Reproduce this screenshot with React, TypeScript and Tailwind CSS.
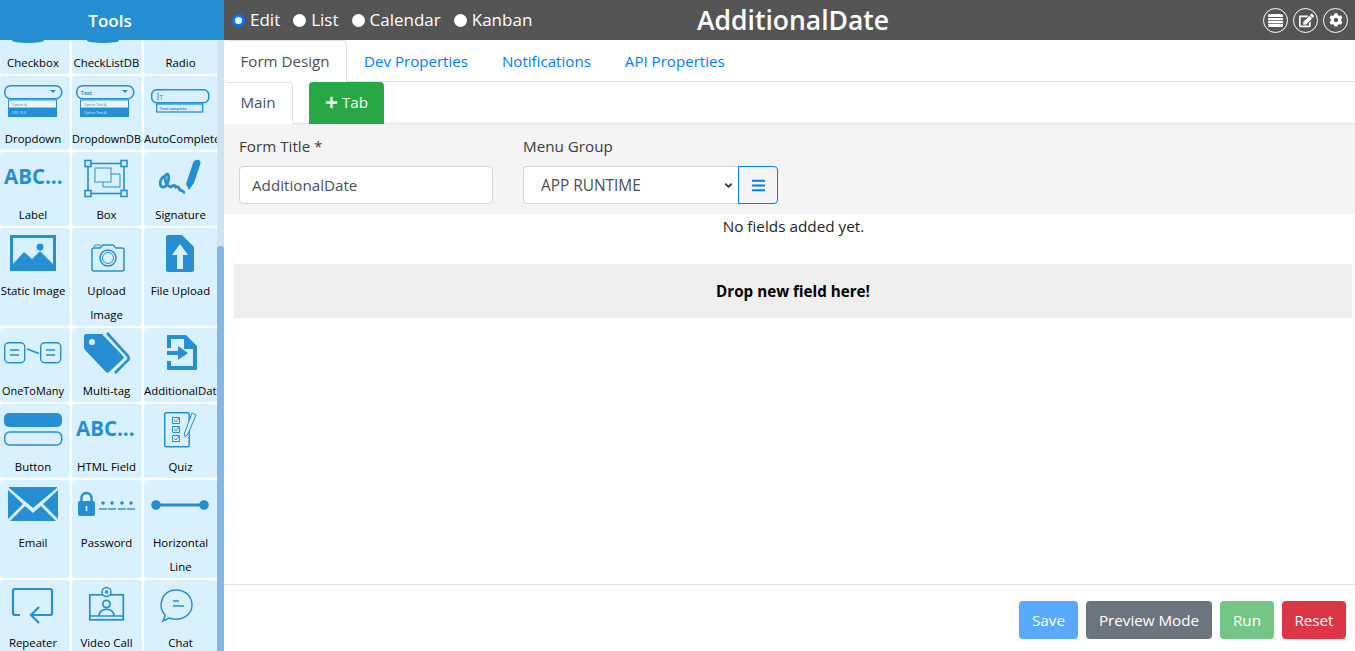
import { FaBars, FaCog, FaEdit, FaPlus } from "react-icons/fa";
import { ChevronDown } from "lucide-react";
import type { ReactNode } from "react";

const BLUE = "#268fd3";
const TILE = "#d9f1ff";

const Svg = ({ children }: { children?: ReactNode }) => (
  <svg viewBox="0 0 72 50" className="h-[50px] w-[72px] shrink-0" fill="none">
    {children}
  </svg>
);

const DropdownIcon = ({ db }: { db?: boolean }) => (
  <Svg>
    <rect x="4.7" y="9.7" width="57" height="13" rx="6" stroke={BLUE} strokeWidth="1.5" />
    {db && <text x="9" y="18.5" fontSize="5" fill={BLUE} fontWeight="700">Text</text>}
    <path d="M50 14h6l-3 3z" fill={BLUE} />
    <rect x="8.5" y="24" width="48" height="8" fill="#eaf7ff" stroke={BLUE} />
    <text x="12" y="30" fontSize="3.5" fill={BLUE}>{db ? "Option Text A" : "Option A"}</text>
    <rect x="8" y="32" width="49" height="9" fill={BLUE} />
    <text x="12" y="38" fontSize="3.5" fill="#d9f1ff">{db ? "Option Text A" : "ODI 16 0"}</text>
  </Svg>
);

const AutoCompleteIcon = () => (
  <Svg>
    <rect x="7.7" y="13.7" width="57" height="13" rx="5" stroke={BLUE} strokeWidth="1.5" />
    <path d="M14 16.5v8" stroke={BLUE} strokeWidth="0.9" />
    <text x="15.5" y="24" fontSize="6.5" fill={BLUE}>T</text>
    <rect x="12.7" y="28" width="46" height="8" fill={TILE} stroke={BLUE} strokeWidth="1.3" />
    <text x="15.5" y="33.7" fontSize="3.8" fill={BLUE} fontWeight="700">Text complete</text>
  </Svg>
);

const AbcIcon = () => (
  <Svg>
    <text x="4" y="32" fontSize="20.5" fontWeight="700" fill={BLUE} fontFamily="'Open Sans', sans-serif">ABC...</text>
  </Svg>
);

const BoxIcon = () => (
  <Svg>
    <rect x="16" y="11.5" width="36" height="30" stroke={BLUE} strokeWidth="1.6" />
    {[[13, 8.5], [49, 8.5], [13, 38.5], [49, 38.5]].map(([x, y]) => (
      <rect key={`${x}-${y}`} x={x} y={y} width="6" height="6" fill={TILE} stroke={BLUE} strokeWidth="1.6" />
    ))}
    <rect x="23" y="16" width="16" height="14" stroke={BLUE} />
    <path d="M39 22h9v13H31v-5" stroke={BLUE} />
  </Svg>
);

const SignatureIcon = () => (
  <Svg>
    <path d="M42 32 49 11c1-4 6-4 7-2 1 1 0 3 0 4l-6 18-5 7z" fill={BLUE} />
    <path d="M20 24c-5 4-5 12 0 11 5-2 6-13 3-13-3 1-3 11 4 13 2-2 4-2 5 0 2-1 3 1 4 3 2 0 3 2 5 3" stroke={BLUE} strokeWidth="2.8" />
  </Svg>
);

const ImageIcon = () => (
  <Svg>
    <path fillRule="evenodd" clipRule="evenodd" d="M10 7h46v36H10zm3 3v26l11-12 8 7 8-8 13 13V10z" fill={BLUE} />
    <circle cx="40" cy="19" r="3.5" fill={BLUE} />
  </Svg>
);

const CameraIcon = () => (
  <Svg>
    <path d="M22 20h6l3-3h10l3 3h6c1 0 2 1 2 2v19c0 1-1 2-2 2H22c-1 0-2-1-2-2V22c0-1 1-2 2-2z" stroke={BLUE} strokeWidth="1.5" />
    <path d="M22 19l1-2h6" stroke={BLUE} />
    <circle cx="36" cy="30" r="8" stroke={BLUE} strokeWidth="1.5" />
    <circle cx="36" cy="30" r="5.5" stroke={BLUE} />
  </Svg>
);

const FileUpIcon = () => (
  <Svg>
    <path d="M24 7h14l12 12v23c0 1-1 2-2 2H24c-1 0-2-1-2-2V9c0-1 1-2 2-2z" fill={BLUE} />
    <path d="M36 16l8 11h-5v14h-6V27h-5z" fill={TILE} />
  </Svg>
);

const OneToManyIcon = () => (
  <Svg>
    <rect x="4.7" y="14.7" width="20" height="20" rx="4" stroke={BLUE} strokeWidth="1.4" />
    <rect x="40.7" y="14.7" width="20" height="20" rx="4" stroke={BLUE} strokeWidth="1.4" />
    <path d="M10 22h9M10 27h9M46 22h9M46 27h9M27 21l12 4.5" stroke={BLUE} strokeWidth="1.4" />
  </Svg>
);

const TagIcon = () => (
  <Svg>
    <path d="M14 6h16l21 22c1 1 1 2 0 3L37 44c-1 1-2 1-3 0L13 22c-1-2-1-2-1-4l0-10c0-1 1-2 2-2z" fill={BLUE} />
    <circle cx="20" cy="14" r="3" fill={TILE} />
    <path d="M35 5l21 23c1 2 1 3 0 4L43 45" stroke={BLUE} strokeWidth="2.6" />
  </Svg>
);

const AdditionalIcon = () => (
  <Svg>
    <path fillRule="evenodd" clipRule="evenodd" d="M23 7h19l11 11v24H23V33h4v5h22V21h-9v-10H27v9h-4z" fill={BLUE} />
    <path d="M23 23h11v-5l10 7-10 7v-5H23z" fill={BLUE} />
  </Svg>
);

const ButtonIcon = () => (
  <Svg>
    <rect x="4" y="9" width="58" height="14" rx="5" fill={BLUE} />
    <rect x="4.7" y="28" width="57" height="13" rx="5" stroke={BLUE} strokeWidth="1.5" />
  </Svg>
);

const QuizIcon = () => (
  <Svg>
    <rect x="20.7" y="8.7" width="24.5" height="34" rx="1.5" stroke={BLUE} strokeWidth="1.5" />
    <path d="M28.5 13.5h7v6h-7zM28.5 22.5h7v6h-7zM28.5 31.5h7v6h-7z" stroke={BLUE} />
    <path d="M30 16l2 2 3-4M30 25l2 2 3-4M30 34l2 2 3-4" stroke={BLUE} />
    <path d="M48 9l4 2-8 19-3 3-0.5-4z" fill={TILE} stroke={BLUE} />
  </Svg>
);

const EmailIcon = () => (
  <Svg>
    <path d="M9 7h48v1L33 28 9 8z" fill={BLUE} />
    <path d="M8 10l15 14L8 39zM58 10 43 24l15 15zM10 41l15-15 8 7 8-7 15 15z" fill={BLUE} />
  </Svg>
);

const PasswordIcon = () => (
  <Svg>
    <path d="M9.5 21v-3a5 5 0 0 1 10 0v3" stroke={BLUE} strokeWidth="2.4" />
    <rect x="6" y="21" width="17" height="15" rx="2" fill={BLUE} />
    <rect x="13.7" y="26" width="1.6" height="5" fill={TILE} />
    {[31, 40, 50, 59].map((x) => (
      <g key={x}>
        <circle cx={x} cy="23" r="1.8" fill={BLUE} />
        <path d={`M${x - 4} 29h8`} stroke={BLUE} strokeWidth="1.3" />
      </g>
    ))}
  </Svg>
);

const LineIcon = () => (
  <Svg>
    <path d="M12 25h48" stroke={BLUE} strokeWidth="3.2" />
    <circle cx="12" cy="25" r="4.8" fill={BLUE} />
    <circle cx="60" cy="25" r="4.8" fill={BLUE} />
  </Svg>
);

const RepeaterIcon = () => (
  <Svg>
    <path d="M20 35h-5c-1 0-2-1-2-2V11c0-1 1-2 2-2h35c1 0 2 1 2 2v22c0 1-1 2-2 2H32" stroke={BLUE} strokeWidth="2.2" />
    <path d="M39 27l-8 8 8 8" stroke={BLUE} strokeWidth="2.2" />
  </Svg>
);

const VideoIcon = () => (
  <Svg>
    <rect x="17.8" y="14.8" width="33.5" height="25" stroke={BLUE} strokeWidth="1.7" />
    <path d="M17 36h34" stroke={BLUE} strokeWidth="1.4" />
    <circle cx="34.5" cy="12" r="4.5" fill={TILE} stroke={BLUE} strokeWidth="1.5" />
    <circle cx="34.5" cy="12" r="1.8" fill={BLUE} />
    <circle cx="34.5" cy="24" r="3.6" stroke={BLUE} strokeWidth="1.7" />
    <path d="M27 36c0-9 15-9 15 0" stroke={BLUE} strokeWidth="1.7" />
  </Svg>
);

const ChatIcon = () => (
  <Svg>
    <path d="M21 35c-8-9-3-25 11-25 10 0 16 7 16 15 0 11-12 17-23 13l-6 3c1-2 2-4 2-6z" stroke={BLUE} strokeWidth="1.5" />
    <path d="M29 21h6M29 26h11" stroke={BLUE} strokeWidth="1.5" />
  </Svg>
);

const TopStub = ({ cx }: { cx: number }) => (
  <Svg>
    <ellipse cx={cx} cy="40.5" rx="16" ry="2.5" fill={BLUE} />
  </Svg>
);

type Tool = { label: string; icon: ReactNode };

const rows: { tall?: boolean; tools: Tool[] }[] = [
  {
    tools: [
      { label: "Checkbox", icon: <TopStub cx={28} /> },
      { label: "CheckListDB", icon: <TopStub cx={31} /> },
      { label: "Radio", icon: <Svg /> },
    ],
  },
  {
    tools: [
      { label: "Dropdown", icon: <DropdownIcon /> },
      { label: "DropdownDB", icon: <DropdownIcon db /> },
      { label: "AutoComplete", icon: <AutoCompleteIcon /> },
    ],
  },
  {
    tools: [
      { label: "Label", icon: <AbcIcon /> },
      { label: "Box", icon: <BoxIcon /> },
      { label: "Signature", icon: <SignatureIcon /> },
    ],
  },
  {
    tall: true,
    tools: [
      { label: "Static Image", icon: <ImageIcon /> },
      { label: "Upload Image", icon: <CameraIcon /> },
      { label: "File Upload", icon: <FileUpIcon /> },
    ],
  },
  {
    tools: [
      { label: "OneToMany", icon: <OneToManyIcon /> },
      { label: "Multi-tag", icon: <TagIcon /> },
      { label: "AdditionalDate", icon: <AdditionalIcon /> },
    ],
  },
  {
    tools: [
      { label: "Button", icon: <ButtonIcon /> },
      { label: "HTML Field", icon: <AbcIcon /> },
      { label: "Quiz", icon: <QuizIcon /> },
    ],
  },
  {
    tall: true,
    tools: [
      { label: "Email", icon: <EmailIcon /> },
      { label: "Password", icon: <PasswordIcon /> },
      { label: "Horizontal Line", icon: <LineIcon /> },
    ],
  },
  {
    tools: [
      { label: "Repeater", icon: <RepeaterIcon /> },
      { label: "Video Call", icon: <VideoIcon /> },
      { label: "Chat", icon: <ChatIcon /> },
    ],
  },
];

const ToolTile = ({ tool, tall, col }: { tool: Tool; tall?: boolean; col: number }) => {
  const clipped = tool.label === "AutoComplete" || tool.label === "AdditionalDate";
  const small = tool.label === "DropdownDB" || tool.label === "OneToMany";
  const inset = col === 0 ? "pr-[4px]" : col === 1 ? "pr-[1px]" : "";
  return (
    <div
      className={`flex flex-col items-start overflow-hidden rounded-[3px] bg-[#d9f1ff] ${tall ? "h-[98px]" : "h-[74px]"}`}
    >
      {tool.icon}
      <div
        className={`mt-[1px] w-full text-center leading-6 text-black ${inset} ${small ? "text-[10.9px]" : "text-[11.4px]"} ${clipped ? "whitespace-nowrap pr-0 text-left" : ""}`}
      >
        {tool.label}
      </div>
    </div>
  );
};

const Sidebar = () => (
  <aside className="flex h-[651px] w-[224px] shrink-0 flex-col overflow-hidden bg-white">
    <div className="z-10 flex h-[40px] shrink-0 items-center justify-center bg-[#268fd3] pr-[4px] pt-[1px] text-[17px] font-semibold text-white">
      Tools
    </div>
    <div className="flex min-h-0 flex-1">
      <div className="-mt-[40px] grid w-[217px] shrink-0 grid-cols-[70px_70px_73px] content-start gap-[2px]">
        {rows.map((row) =>
          row.tools.map((tool, col) => (
            <ToolTile key={tool.label} tool={tool} tall={row.tall} col={col} />
          )),
        )}
      </div>
      <div className="w-[7px] bg-[#cfe2f0] pt-[206px]">
        <div className="h-full w-full rounded-t-[3px] bg-[#85b7e6]" />
      </div>
    </div>
  </aside>
);

const RadioOption = ({ label, checked }: { label: string; checked?: boolean }) => (
  <label className="flex items-center gap-[5px]">
    <span
      className={`size-[13px] rounded-full bg-white ${checked ? "border-[3px] border-[#0075ff]" : ""}`}
    />
    {label}
  </label>
);

const TableGlyph = () => (
  <svg viewBox="0 0 16 14" className="h-[13px] w-[15px]" fill="#fff">
    <path d="M0 1c0-.6.4-1 1-1h14c.6 0 1 .4 1 1v2.3H0zM0 4.2h16v2.4H0zM0 7.5h16v2.4H0zM0 10.8h16V13c0 .6-.4 1-1 1H1c-.6 0-1-.4-1-1z" />
  </svg>
);

const TopBar = () => (
  <header className="relative flex h-[40px] shrink-0 items-center bg-[#555555] pl-[8px] pr-[7px] text-white">
    <div className="flex items-center gap-[13px] text-[17px]">
      <RadioOption label="Edit" checked />
      <RadioOption label="List" />
      <RadioOption label="Calendar" />
      <RadioOption label="Kanban" />
    </div>
    <h1 className="absolute left-[473px] text-[26.5px] font-semibold leading-none">AdditionalDate</h1>
    <div className="ml-auto flex items-center gap-[5px]">
      <span className="flex size-[25px] items-center justify-center rounded-full border border-white">
        <TableGlyph />
      </span>
      <span className="flex size-[25px] items-center justify-center rounded-full border border-white pl-[2px]">
        <FaEdit className="size-[15px]" />
      </span>
      <span className="flex size-[25px] items-center justify-center rounded-full border border-white">
        <FaCog className="size-[14px]" />
      </span>
    </div>
  </header>
);

const NavTabs = () => (
  <nav className="flex h-[42px] shrink-0 border-b border-[#dee2e6] text-[15.1px]">
    <span className="-mb-px flex h-[42px] w-[123px] items-center justify-center rounded-t-[4px] border-r border-t border-[#dee2e6] bg-white pb-[1px] text-[#495057]">
      Form Design
    </span>
    {["Dev Properties", "Notifications", "API Properties"].map((t) => (
      <span key={t} className="flex items-center px-[17px] pt-[1px] text-[#007bff]">
        {t}
      </span>
    ))}
  </nav>
);

const PageTabs = () => (
  <div className="flex h-[42px] shrink-0 border-b border-[#dee2e6] text-[15.2px]">
    <span className="-mb-px flex h-[42px] w-[69px] items-center justify-center rounded-t-[4px] border-r border-t border-[#dee2e6] bg-white pb-[2px] text-[#495057]">
      Main
    </span>
    <span className="-mb-px ml-[16px] flex h-[42px] w-[75px] items-center justify-center gap-[4px] rounded-t-[4px] bg-[#28a745] pb-[2px] text-white">
      <FaPlus className="size-[13px]" />
      Tab
    </span>
  </div>
);

const FormHeader = () => (
  <div className="flex h-[90px] shrink-0 gap-[30px] bg-[#f4f4f4] pl-[15px] pt-[10px] text-[15.2px] text-[#3c3c3c]">
    <div className="w-[254px]">
      <div className="mb-[8px] h-[24px] leading-6">Form Title *</div>
      <div className="flex h-[38px] items-center rounded-[4px] border border-[#ced4da] bg-white px-[12px] pt-[1px] text-[#495057]">
        AdditionalDate
      </div>
    </div>
    <div className="w-[255px]">
      <div className="mb-[8px] h-[24px] leading-6">Menu Group</div>
      <div className="flex h-[38px]">
        <div className="flex flex-1 items-center justify-between rounded-l-[4px] border border-r-0 border-[#ced4da] bg-white pl-[17px] pr-[4px] text-[15.4px] text-[#495057]">
          <span className="pt-[2px]">APP RUNTIME</span>
          <ChevronDown className="size-[11px] text-[#333]" strokeWidth={4} />
        </div>
        <div className="flex w-[40px] items-center justify-center rounded-r-[4px] border border-[#007bff] text-[#007bff]">
          <FaBars className="size-[15px]" />
        </div>
      </div>
    </div>
  </div>
);

const Canvas = () => (
  <div className="flex min-h-0 flex-1 flex-col text-[#212529]">
    <div className="pl-[8px] text-center text-[15.3px] leading-[25px]">No fields added yet.</div>
    <div className="ml-[10px] mr-[3px] mt-[25px] flex h-[54px] items-center justify-center bg-[#eeeeee] text-[15.2px] font-bold text-black">
      Drop new field here!
    </div>
  </div>
);

const Footer = () => (
  <footer className="flex h-[67px] shrink-0 items-start justify-end gap-[8px] border-t border-[#dee2e6] pr-[9px] pt-[16px] text-[15.2px] text-white">
    <button className="h-[38px] w-[59px] rounded-[4px] bg-[#59a9ff]">Save</button>
    <button className="h-[38px] w-[126px] rounded-[4px] bg-[#6c757d]">Preview Mode</button>
    <button className="h-[38px] w-[54px] rounded-[4px] bg-[#74c687]">Run</button>
    <button className="h-[38px] w-[64px] rounded-[4px] bg-[#dc3545]">Reset</button>
  </footer>
);

export default function App() {
  return (
    <div className="flex h-[651px] w-[1355px] overflow-hidden bg-white font-['Open_Sans',sans-serif]">
      <Sidebar />
      <main className="flex min-w-0 flex-1 flex-col">
        <TopBar />
        <NavTabs />
        <PageTabs />
        <FormHeader />
        <Canvas />
        <Footer />
      </main>
    </div>
  );
}
